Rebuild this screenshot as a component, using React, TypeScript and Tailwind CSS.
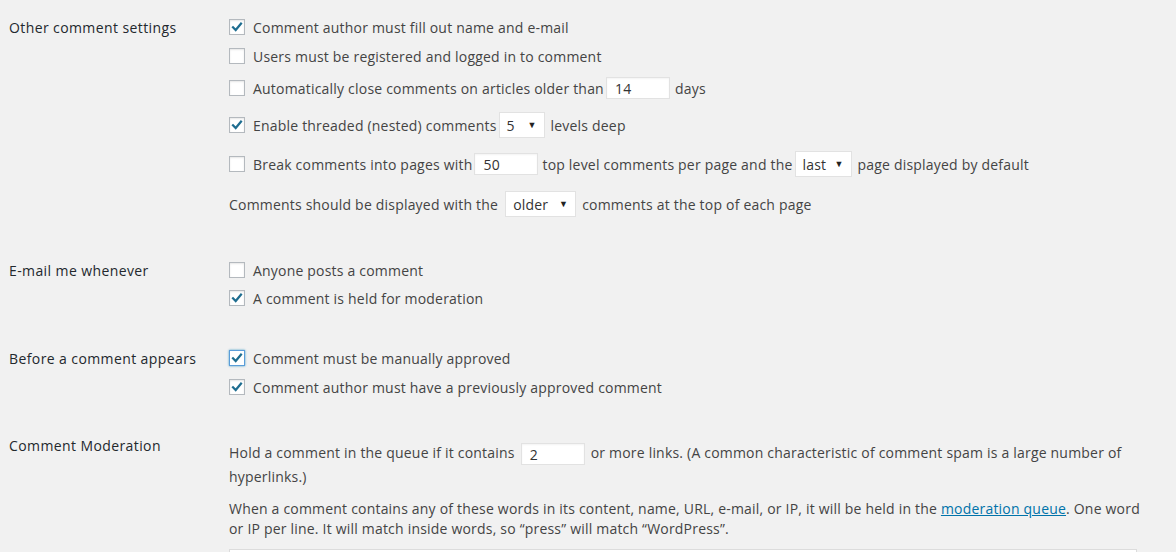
import React from "react";

const Check = ({ checked, focused }: { checked?: boolean; focused?: boolean }) => (
  <span
    className={`inline-flex items-center justify-center w-[16px] h-[16px] shrink-0 bg-white border ${
      focused ? "border-[#5b9dd9] shadow-[0_0_2px_rgba(30,140,190,0.8)]" : "border-[#b4b9be] shadow-[inset_0_1px_2px_rgba(0,0,0,0.1)]"
    }`}
  >
    {checked && (
      <svg width="12" height="12" viewBox="0 0 12 12">
        <path d="M2 6.2 L4.7 9 L10 2.6" fill="none" stroke="#1e6d90" strokeWidth="2.2" strokeLinecap="square" />
      </svg>
    )}
  </span>
);

const TextBox = ({ value, w }: { value: string; w: string }) => (
  <span
    className={`inline-flex items-center h-[22px] ${w} px-[8px] mx-[2px] bg-white border border-[#e2e2e2] text-[#333] shadow-[inset_0_1px_2px_rgba(0,0,0,0.05)] align-middle`}
  >
    {value}
  </span>
);

const SelectBox = ({ value, w }: { value: string; w: string }) => (
  <span
    className={`inline-flex items-center justify-between h-[26px] ${w} pl-[7px] pr-[7px] mx-[2px] bg-white border border-[#e2e2e2] text-[#333] align-middle`}
  >
    <span>{value}</span>
    <span className="text-[9px] text-[#222]">▼</span>
  </span>
);

const CheckRow = ({ h, checked, focused, children }: { h: string; checked?: boolean; focused?: boolean; children: React.ReactNode }) => (
  <div className={`flex items-center ${h}`}>
    <Check checked={checked} focused={focused} />
    <div className="ml-[8px] flex items-center whitespace-nowrap">{children}</div>
  </div>
);

const Label = ({ children, h }: { children: React.ReactNode; h: string }) => (
  <div className={`w-[229px] shrink-0 pl-[9px] text-[#23282d] tracking-[0.4px] flex items-center ${h}`}>{children}</div>
);

export default function App() {
  return (
    <div
      className="w-[1176px] h-[552px] overflow-hidden bg-[#f1f1f1] text-[#444] text-[14px] tracking-[0.2px] pt-[13px]"
      style={{ fontFamily: '"Open Sans", "Noto Sans", sans-serif' }}
    >
      <div className="flex">
        <div className="flex flex-col">
          <Label h="h-[28px]">Other comment settings</Label>
        </div>
        <div className="flex flex-col">
          <CheckRow h="h-[28px]" checked>
            Comment author must fill out name and e-mail
          </CheckRow>
          <CheckRow h="h-[30px]">Users must be registered and logged in to comment</CheckRow>
          <CheckRow h="h-[34px]">
            Automatically close comments on articles older than
            <TextBox value="14" w="w-[64px]" />
            <span className="ml-[3px]">days</span>
          </CheckRow>
          <CheckRow h="h-[40px]" checked>
            Enable threaded (nested) comments
            <SelectBox value="5" w="w-[46px]" />
            <span className="ml-[4px]">levels deep</span>
          </CheckRow>
          <CheckRow h="h-[38px]">
            Break comments into pages with
            <TextBox value="50" w="w-[64px]" />
            <span className="ml-[2px]">top level comments per page and the</span>
            <SelectBox value="last" w="w-[57px]" />
            <span className="ml-[4px]">page displayed by default</span>
          </CheckRow>
          <div className="flex items-center h-[42px] whitespace-nowrap">
            Comments should be displayed with the
            <span className="ml-[5px]" />
            <SelectBox value="older" w="w-[71px]" />
            <span className="ml-[4px]">comments at the top of each page</span>
          </div>
        </div>
      </div>

      <div className="flex mt-[31px]">
        <Label h="h-[28px]">E-mail me whenever</Label>
        <div className="flex flex-col">
          <CheckRow h="h-[28px]">Anyone posts a comment</CheckRow>
          <CheckRow h="h-[28px]" checked>
            A comment is held for moderation
          </CheckRow>
        </div>
      </div>

      <div className="flex mt-[32px]">
        <Label h="h-[28px]">Before a comment appears</Label>
        <div className="flex flex-col">
          <CheckRow h="h-[28px]" checked focused>
            Comment must be manually approved
          </CheckRow>
          <CheckRow h="h-[30px]" checked>
            Comment author must have a previously approved comment
          </CheckRow>
        </div>
      </div>

      <div className="flex mt-[29px]">
        <Label h="h-[28px]">Comment Moderation</Label>
        <div className="flex flex-col w-[910px] pt-[10px]">
          <p className="leading-[23px] whitespace-nowrap">
            Hold a comment in the queue if it contains
            <span className="ml-[4px]" />
            <TextBox value="2" w="w-[64px]" />
            <span className="ml-[4px]">or more links. (A common characteristic of comment spam is a large number of</span>
            <br />
            hyperlinks.)
          </p>
          <p className="leading-[19.5px] mt-[11px] whitespace-nowrap">
            When a comment contains any of these words in its content, name, URL, e-mail, or IP, it will be held in the{" "}
            <a className="text-[#0073aa] underline">moderation queue</a>. One word
            <br />
            or IP per line. It will match inside words, so “press” will match “WordPress”.
          </p>
          <div className="mt-[11px] h-[60px] w-[908px] bg-white border border-[#dcdcdc]" />
        </div>
      </div>
    </div>
  );
}
